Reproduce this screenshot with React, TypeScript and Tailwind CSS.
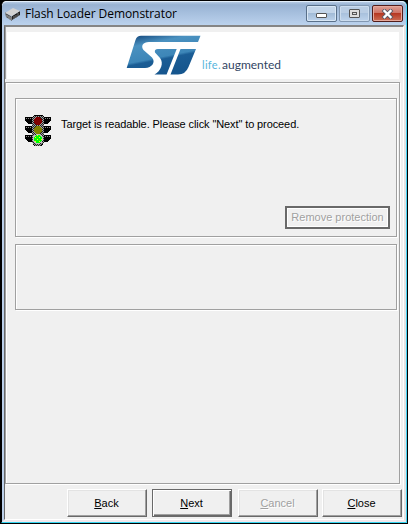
import React from 'react';

const TITLE = 'bg-[linear-gradient(to_bottom,#b5cae4,#98b2d2_12%,#a5bedd_45%,#bbd2ed)]';
const ETCHED = 'border border-[#a0a0a0] shadow-[1px_1px_0_#fff,inset_1px_1px_0_#fff]';

function Chip() {
  return (
    <svg width="16" height="16" viewBox="0 0 16 16">
      <path d="M0 6L4 9L7 11V15L1 11Z" fill="#555" />
      <path d="M7 10L15 5V9L7 14Z" fill="#222" />
      <path d="M0 7L8 2L15 5L7 10Z" fill="#d2d2d2" />
      <path d="M2 9v2M4 10v3M6 11v3" stroke="#aaa" />
      <path d="M9 10v3M11 9v3M13 7v3" stroke="#777" />
    </svg>
  );
}

function Logo() {
  return (
    <svg width="76" height="42" viewBox="0 0 76 42">
      <defs>
        <linearGradient id="blue" gradientUnits="userSpaceOnUse" x1="20" y1="0" x2="28" y2="40">
          <stop offset="0" stopColor="#1d5488" />
          <stop offset=".22" stopColor="#4a91c0" />
          <stop offset=".6" stopColor="#3d86b8" />
          <stop offset=".66" stopColor="#1b5d95" />
          <stop offset="1" stopColor="#16568e" />
        </linearGradient>
      </defs>
      <path d="M15 .8H74.500L72 7H23C17 7 14.500 11 17.500 15L26 22.500C30 27 26 33 19 33H.7L9.500 5Q11 .8 15 .8Z" fill="url(#blue)" />
      <path d="M32 14H50.700L40.600 39.500H28.500C35 36 38 28 34 23L29 17.500Q28 14 32 14Z" fill="url(#blue)" />
      <path d="M54.500 14H70L62.500 32Q59.500 39.500 52 39.500H44.500Z" fill="url(#blue)" />
    </svg>
  );
}

function TrafficLight() {
  return (
    <svg width="26" height="32" viewBox="0 0 26 32" shapeRendering="crispEdges">
      <defs>
        <pattern id="dither" width="2" height="2" patternUnits="userSpaceOnUse">
          <path d="M0 0h2v2H0z" fill="#222" />
          <path d="M0 0h1v1H0zM1 1h1v1H1z" fill="#a0a0a0" />
        </pattern>
        <pattern id="glow" width="4" height="4" patternUnits="userSpaceOnUse">
          <path d="M0 0h4v4H0z" fill="#00ff00" />
          <path d="M0 0h1v1H0zM2 2h1v1H2z" fill="#ffff00" />
        </pattern>
      </defs>
      <path d="M0 2h26v3l-3 4h-4v2h7v3l-3 4h-4v2h7v3l-3 4h-4l-2 4H9l-2-4H3l-3-4v-3h7v-2H3l-3-4v-3h7V9H3L0 5zM9 0h8l2 2H7z" fill="#000" />
      <path d="M9 1h8l2 2v24l-3 4h-6l-3-4V3z" fill="url(#dither)" />
      <path d="M1 3.500h5M1 12.500h5M1 21.500h5M20 3.500h5M20 12.500h5M20 21.500h5" stroke="#888" strokeDasharray="1 1" />
      <circle cx="13" cy="6" r="4.200" fill="#800000" />
      <circle cx="13" cy="15" r="4.200" fill="#808000" />
      <circle cx="13" cy="24" r="5.200" fill="#c0c0c0" />
      <circle cx="13" cy="24" r="4.200" fill="url(#glow)" />
    </svg>
  );
}

function PushButton({ label, state }: { label: string; state?: 'default' | 'disabled' }) {
  const frame =
    state === 'default'
      ? 'border-[#696969] shadow-[inset_1px_1px_0_#fff,inset_-1px_-1px_0_#696969,inset_-2px_-2px_0_#a0a0a0]'
      : 'border-t-white border-l-white border-r-[#696969] border-b-[#696969] shadow-[inset_-1px_-1px_0_#a0a0a0,inset_1px_1px_0_#e3e3e3]';
  const ink = state === 'disabled' ? 'text-[#a0a0a0] [text-shadow:1px_1px_0_#fff]' : 'text-black';
  return (
    <button className={`h-7 w-20 border pr-[1px] text-[11px] leading-[13px] ${frame} ${ink}`}>
      <span className="underline underline-offset-1">{label[0]}</span>{label.slice(1)}
    </button>
  );
}

export default function App() {
  return (
    <div className="h-[524px] w-[408px] overflow-hidden bg-black p-px font-['Liberation_Sans',Arial,sans-serif] text-[11px] text-black">
      <div className="flex h-[522px] w-[406px] flex-col rounded-t-[5px] border-b border-l border-r border-b-[#35d4ef] border-l-black border-r-[#45d5f5] bg-[#f0f0f0]">
        <header className={`flex h-6 shrink-0 items-center rounded-t-[5px] border-t border-[#e1edf9] pl-[3px] pr-[3px] ${TITLE}`}>
          <Chip />
          <h1 className="ml-[4px] whitespace-nowrap font-['Open_Sans','Noto_Sans',sans-serif] text-[12px] leading-4 tracking-[-0.06px]">Flash Loader Demonstrator</h1>
          <div className="ml-auto flex gap-[2px]">
            <div className="flex h-[17px] w-[31px] items-end justify-center rounded-[2px] border border-[#59708a] bg-[linear-gradient(#c3d5e9_45%,#a2bbd7_50%,#bdd3ec)] pb-[3px] shadow-[inset_0_0_0_1px_#d8e7f5]">
              <span className="h-[5px] w-[11px] rounded-[1px] border border-[#555] bg-white" />
            </div>
            <div className="flex h-[17px] w-[31px] items-center justify-center rounded-[2px] border border-[#8298b2] bg-[linear-gradient(#b9cde4_45%,#a9c1dd_50%,#bdd3ec)] shadow-[inset_0_0_0_1px_#cbdcee]">
              <span className="flex h-[9px] w-[11px] items-center justify-center rounded-[1px] border border-[#555] bg-[#ddd]"><i className="h-[3px] w-[5px] border border-[#555]" /></span>
            </div>
            <div className="flex h-[17px] w-[31px] items-center justify-center rounded-[2px] border border-[#521d1b] bg-[linear-gradient(#dda097,#cf7466_45%,#b63823_50%,#cd6e55)] shadow-[inset_0_0_0_1px_#e6a99c]">
              <svg width="13" height="10" viewBox="0 0 13 10"><path d="M3.500 2L9.500 8M9.500 2L3.500 8" stroke="#555967" strokeWidth="4" strokeLinecap="square" /><path d="M3.500 2L9.500 8M9.500 2L3.500 8" stroke="#fff" strokeWidth="2.400" strokeLinecap="square" /></svg>
            </div>
          </div>
        </header>
        <div className="flex min-h-0 flex-1 border-b-2 border-l-2 border-r-2 border-b-[#f0e8ec] border-l-[#bcd0ea] border-r-[#e3e3e3]">
          <main className="flex flex-1 flex-col border-b border-l border-r border-t-2 border-b-white border-l-[#696969] border-r-white border-t-[#858585]">
            <div className="flex shrink-0 border-l border-[#a0a0a0] pl-[1px] pt-[5px]">
              <div className="flex h-[47px] w-[392px] bg-white pl-[119px]">
                <div className="mt-[3px]"><Logo /></div>
                <p className="mt-[24px] flex whitespace-nowrap font-['Lato',sans-serif] text-[12px] leading-[18px] text-[#324563]"><span className="w-[20px] text-[11px] tracking-[0.3px] text-[#56b5dd]">life.</span>augmented</p>
              </div>
            </div>
            <section className="mt-[3px] h-[402px] w-[395px] shrink-0 border border-[#a0a0a0] pl-[9px] pt-[15px] shadow-[1px_1px_0_#fff,inset_1px_1px_0_#fff]">
              <div className={`flex h-[139px] w-[382px] ${ETCHED}`}>
                <div className="ml-[9px] mt-[16px]"><TrafficLight /></div>
                <p className="ml-[10px] mt-[18px] w-[240px] shrink-0 whitespace-nowrap leading-[14px] tracking-[-0.1px]">Target is readable. Please click "Next" to proceed.</p>
                <button className="-ml-[16px] mt-[107px] h-[23px] w-[105px] shrink-0 whitespace-nowrap border-2 border-[#696969] text-[#a0a0a0] shadow-[inset_1px_1px_0_#fff,inset_-1px_-1px_0_#fff] [text-shadow:1px_1px_0_#fff]">Remove protection</button>
              </div>
              <div className={`mt-[7px] h-[66px] w-[382px] ${ETCHED}`} />
            </section>
            <footer className="mt-[5px] flex pl-[62px]">
              <PushButton label="Back" />
              <div className="ml-[5px]"><PushButton label="Next" state="default" /></div>
              <div className="ml-[6px]"><PushButton label="Cancel" state="disabled" /></div>
              <div className="ml-[4px]"><PushButton label="Close" /></div>
            </footer>
          </main>
        </div>
      </div>
    </div>
  );
}
